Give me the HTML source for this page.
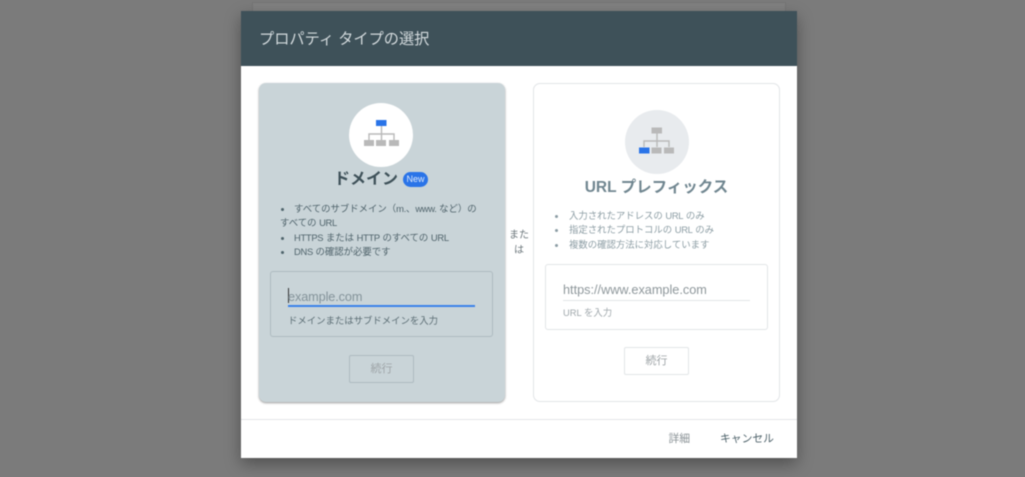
<!DOCTYPE html>
<html lang="ja">
<head>
<meta charset="utf-8">
<title>プロパティ タイプの選択</title>
<style>
html,body{margin:0;padding:0;width:1025px;height:477px;overflow:hidden;background:#7b7b7b;}
*{box-sizing:border-box;}
body{font-family:"Liberation Sans","Noto Sans CJK JP",sans-serif;position:relative;}
.abs{position:absolute;white-space:nowrap;}
#wrap{position:absolute;left:0;top:0;width:1025px;height:477px;filter:blur(.4px);}
#behind{position:absolute;left:252px;top:2px;width:534px;height:30px;background:#818181;border:1px solid #757575;}
#dlg{position:absolute;left:241px;top:11px;width:556px;height:447px;background:#fff;box-shadow:0 6px 16px rgba(0,0,0,.35);border-radius:2px 2px 0 0;}
#hdr{position:absolute;left:0;top:0;width:556px;height:55px;background:#3e5159;color:#d3dadd;font-size:15.2px;line-height:58px;padding-left:18px;overflow:hidden;}
.card{position:absolute;top:72px;width:247px;height:320px;border-radius:7px;}
#c1{left:17.5px;width:246.5px;height:319px;background:#c9d4d8;box-shadow:0 1px 2px rgba(0,0,0,.4);}
#c2{left:292px;height:319px;background:#fff;border:1px solid #e2e5e7;}
.circle{position:absolute;width:64px;height:64px;border-radius:50%;}
.inbox{position:absolute;left:12px;width:223px;height:66px;border-radius:3px;}
.btn{position:absolute;left:91px;width:65px;height:28px;border-radius:2px;font-size:11px;line-height:26px;text-align:center;color:#9ea4a7;}
ul{position:absolute;margin:0;padding:0;list-style:none;font-size:9.4px;line-height:14.5px;}
li{position:relative;white-space:nowrap;}
li i{position:absolute;top:6px;width:3px;height:3px;border-radius:50%;background:currentColor;}
b.l{font-weight:400;letter-spacing:-.3px;}
</style>
</head>
<body>
<div id="wrap">
  <div id="behind"></div>
  <div id="dlg">
    <div id="hdr">プロパティ タイプの選択</div>

    <div class="card" id="c1">
      <div class="circle" style="left:90.500px;top:20px;background:#fff;">
        <svg width="64" height="64" viewBox="0 0 64 64">
          <path d="M32.500 22V37M20 37V31H45V37" fill="none" stroke="#b9b9b9" stroke-width="1.400"/>
          <rect x="27" y="17" width="10.500" height="6" fill="#2a74e8"/>
          <rect x="15" y="37" width="10" height="6" fill="#b9b9b9"/>
          <rect x="27" y="37" width="10" height="6" fill="#b9b9b9"/>
          <rect x="40" y="37" width="10" height="6" fill="#b9b9b9"/>
        </svg>
      </div>
      <div class="abs" style="left:75.500px;top:85px;font-size:16px;line-height:24px;font-weight:700;color:#3e5159;">ドメイン</div>
      <div class="abs" style="left:144.500px;top:89px;width:25px;height:15px;border-radius:8px;background:#2a74e8;color:#dfeafc;font-size:9px;line-height:15px;text-align:center;">New</div>
      <ul style="left:21.500px;top:118.500px;color:#4f636b;">
        <li style="padding-left:14px;"><i style="left:1px;"></i>すべてのサブドメイン（<b class="l">m.</b>、<b class="l">www.</b> など）の</li>
        <li>すべての <b class="l">URL</b></li>
        <li style="padding-left:14px;"><i style="left:1px;"></i><b class="l">HTTPS</b> または <b class="l">HTTP</b> のすべての <b class="l">URL</b></li>
        <li style="padding-left:14px;"><i style="left:1px;"></i><b class="l">DNS</b> の確認が必要です</li>
      </ul>
      <div class="inbox" style="left:11.500px;top:188px;border:1px solid #aebbc0;">
        <div class="abs" style="left:17px;top:16px;width:1px;height:15px;background:#333;"></div>
        <div class="abs" style="left:17px;top:16px;font-size:12.700px;letter-spacing:-.1px;line-height:18px;color:#84939a;">example.com</div>
        <div class="abs" style="left:17px;top:33px;width:187px;height:2px;background:#3b82ea;"></div>
        <div class="abs" style="left:17px;top:41.500px;font-size:9.400px;line-height:14px;color:#5b6d74;">ドメインまたはサブドメインを入力</div>
      </div>
      <div class="btn" style="left:90.500px;top:272px;border:1px solid #aebbc0;">続行</div>
    </div>

    <div class="abs" style="left:265px;top:218px;width:26px;text-align:center;white-space:normal;font-size:10px;line-height:14.500px;color:#6b767b;">また<br>は</div>

    <div class="card" id="c2">
      <div class="circle" style="left:91px;top:26px;background:#e8ebee;">
        <svg width="64" height="64" viewBox="0 0 64 64">
          <path d="M32 22V37M19 37V31H44V37" fill="none" stroke="#b9b9b9" stroke-width="1.400"/>
          <rect x="26.500" y="17.500" width="10.500" height="6" fill="#b9b9b9"/>
          <rect x="14" y="37.500" width="10.500" height="6" fill="#2a74e8"/>
          <rect x="26.500" y="37.500" width="10" height="6" fill="#b9b9b9"/>
          <rect x="39" y="37.500" width="10" height="6" fill="#b9b9b9"/>
        </svg>
      </div>
      <div class="abs" style="left:0;top:92px;width:245px;text-align:center;font-size:15.500px;line-height:24px;font-weight:700;color:#708690;">URL プレフィックス</div>
      <ul style="left:35px;top:124.500px;color:#8c9da4;">
        <li><i style="left:-14px;"></i>入力されたアドレスの <b class="l">URL</b> のみ</li>
        <li><i style="left:-14px;"></i>指定されたプロトコルの <b class="l">URL</b> のみ</li>
        <li><i style="left:-14px;"></i>複数の確認方法に対応しています</li>
      </ul>
      <div class="inbox" style="left:11px;top:180px;border:1px solid #e2e5e7;">
        <div class="abs" style="left:17px;top:16px;font-size:12.700px;line-height:18px;color:#8e979b;">https://www.example.com</div>
        <div class="abs" style="left:17px;top:35px;width:187px;height:1px;background:#e2e5e7;"></div>
        <div class="abs" style="left:17px;top:41px;font-size:9.400px;line-height:14px;color:#a0a8ac;">URL を入力</div>
      </div>
      <div class="btn" style="left:90px;top:263px;border:1px solid #e2e5e7;">続行</div>
    </div>

    <div class="abs" style="left:0;top:408px;width:556px;height:1px;background:#e4e6e8;"></div>
    <div class="abs" style="left:427.500px;top:420px;font-size:10.800px;line-height:16px;color:#8a9296;">詳細</div>
    <div class="abs" style="left:479px;top:420px;font-size:10.800px;line-height:16px;color:#4f636b;">キャンセル</div>
  </div>
</div>
</body>
</html>
